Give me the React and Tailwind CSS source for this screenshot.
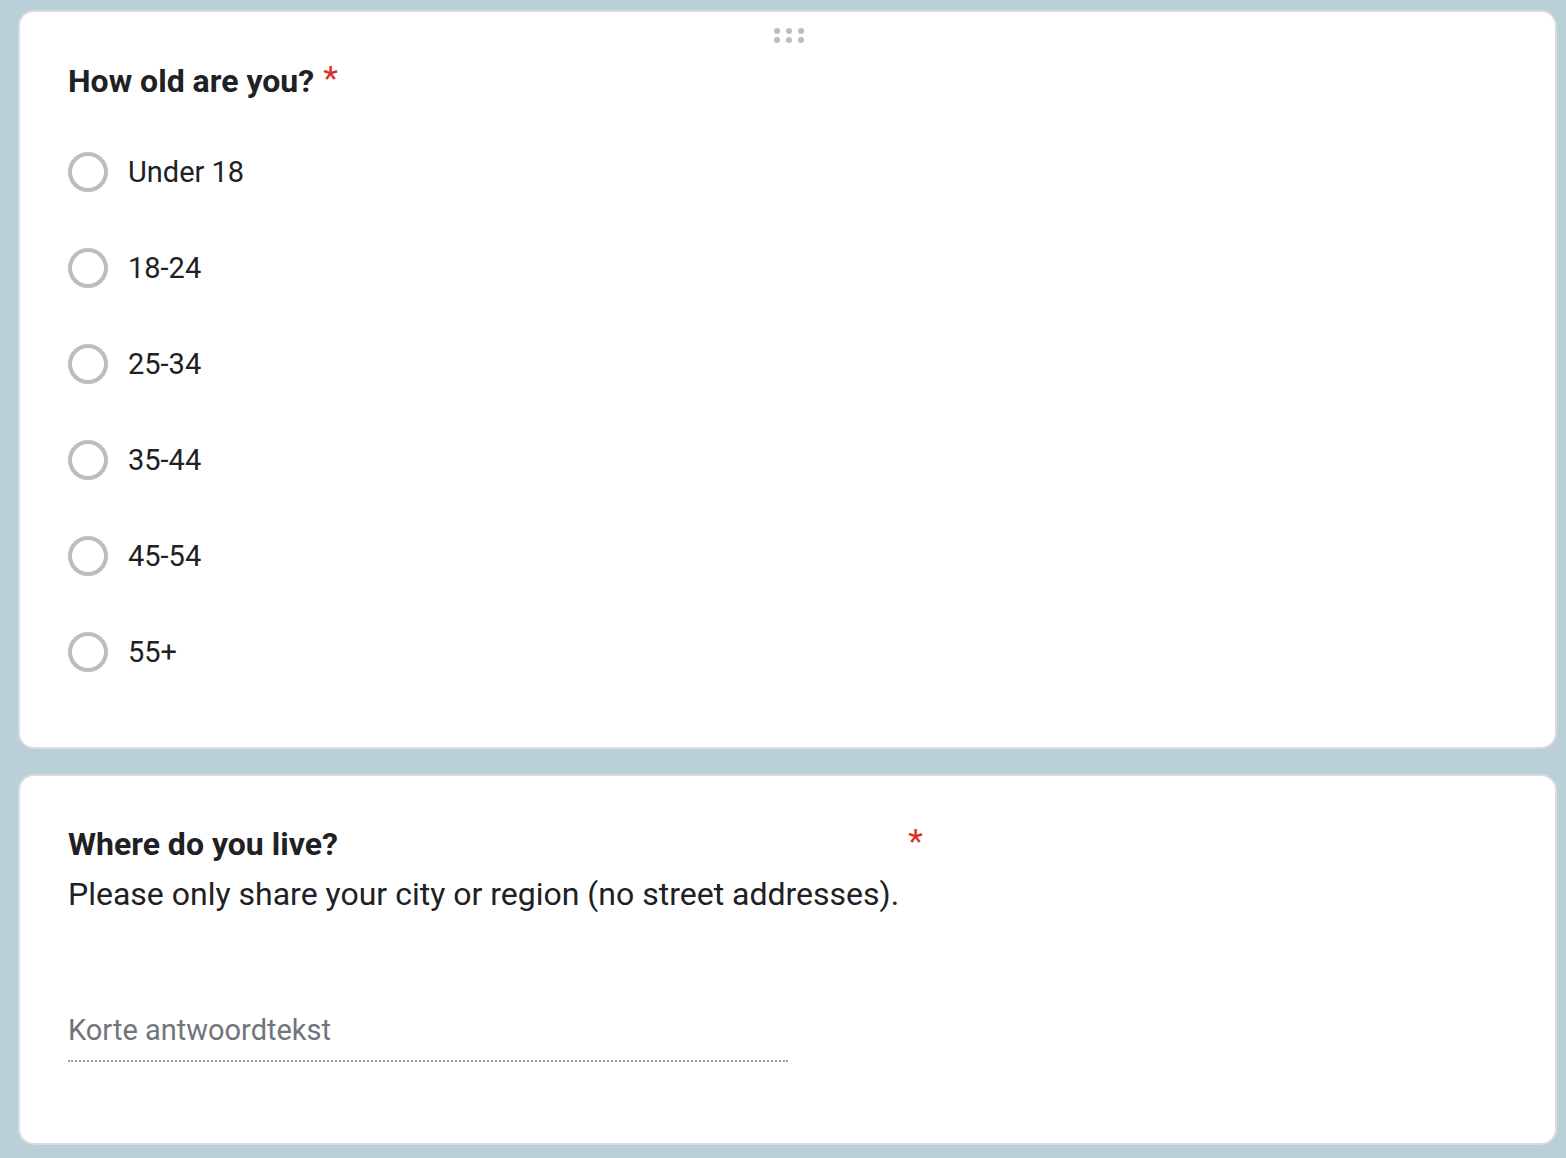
export default function App() {
  const options = ["Under 18", "18-24", "25-34", "35-44", "45-54", "55+"];

  return (
    <div
      className="min-h-[1158px] bg-[#b9d0d8] pt-[10px] pl-[18px] pr-[9px] pb-[15px] text-[#202124]"
      style={{ fontFamily: "Roboto, 'Noto Sans', Arial, sans-serif" }}
    >
      {/* Question 1 */}
      <div className="bg-white border-2 border-[#dadce0] rounded-[16px] px-[48px] pb-[47px]">
        <div className="pt-[16px] flex justify-center">
          <div className="grid grid-cols-3 gap-x-[6px] gap-y-[3px] ml-[3px]">
            {[0, 1, 2, 3, 4, 5].map((i) => (
              <span key={i} className="block w-[6px] h-[6px] rounded-full bg-[#bdbdbd]" />
            ))}
          </div>
        </div>
        <div className="mt-[18px] flex items-start">
          <h2 className="text-[32px] leading-[40px] font-bold">How old are you?</h2>
          <span className="ml-[9px] text-[34px] leading-[34px] text-[#d93025]">*</span>
        </div>
        <div className="mt-[23px]">
          {options.map((opt) => (
            <label key={opt} className="h-[96px] flex items-center">
              <span className="w-[40px] h-[40px] rounded-full border-[4px] border-[#bdbdbd]" />
              <span className="ml-[20px] text-[29px] leading-[40px]">{opt}</span>
            </label>
          ))}
        </div>
      </div>

      {/* Question 2 */}
      <div className="mt-[25px] bg-white border-2 border-[#dadce0] rounded-[16px] px-[48px] pt-[48px] pb-[81px]">
        <div className="flex items-start">
          <div>
            <h2 className="text-[32px] leading-[40px] font-bold">Where do you live?</h2>
            <p className="mt-[10px] text-[32px] leading-[40px]">
              Please only share your city or region (no street addresses).
            </p>
          </div>
          <span className="ml-[9px] text-[34px] leading-[34px] text-[#d93025]">*</span>
        </div>
        <div className="mt-[96px] w-[720px] border-b-2 border-dotted border-[#9e9e9e]">
          <span className="block text-[29px] leading-[40px] text-[#70757a] pb-[10px]">
            Korte antwoordtekst
          </span>
        </div>
      </div>
    </div>
  );
}
